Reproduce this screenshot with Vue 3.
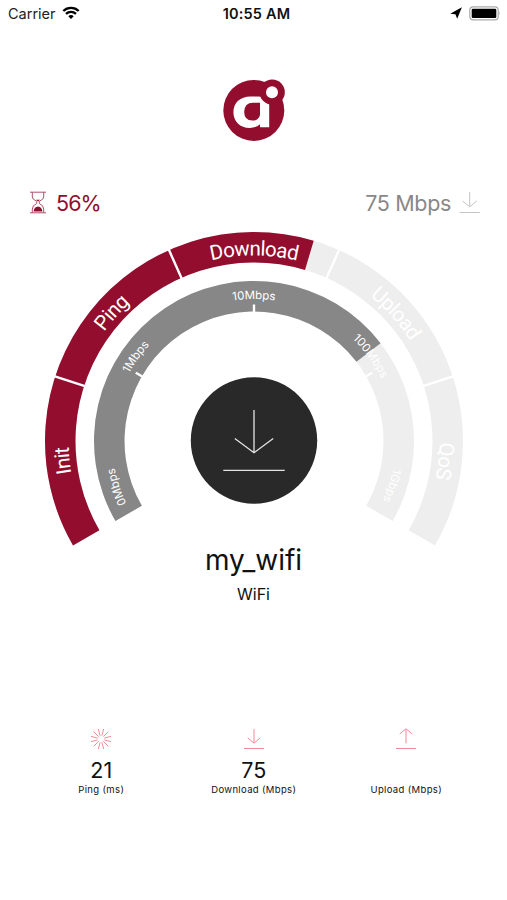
<template>
  <div class="screen">
    <header class="status-bar">
      <div class="carrier">
        <span>Carrier</span>
        <svg class="wifi" width="18" height="14" viewBox="0 0 18 14">
          <path d="M9 13 L6.3 10.2 A3.9 3.9 0 0 1 11.7 10.2 Z" />
          <path class="wave" d="M4 7.9 A7.2 7.2 0 0 1 14 7.9" />
          <path class="wave" d="M1.3 5 A11 11 0 0 1 16.7 5" />
        </svg>
      </div>
      <span class="clock">10:55 AM</span>
      <div class="indicators">
        <svg width="12" height="12" viewBox="0 0 12 12">
          <path d="M11.9 0.2 L7.2 11.8 L5.4 7.2 L0.2 6.8 Z" />
        </svg>
        <svg width="32" height="15" viewBox="0 0 32 15">
          <rect class="battery-case" x="0.8" y="0.9" width="28.4" height="13" rx="3.4" />
          <rect x="2.7" y="2.8" width="24.6" height="9.2" rx="1.2" />
          <path class="battery-cap" d="M30.4 5 Q32 7.4 30.4 9.8 Z" />
        </svg>
      </div>
    </header>

    <svg class="logo" width="64" height="64" viewBox="222 78 64 64">
      <circle class="brand" cx="253.8" cy="110.4" r="30.5" />
      <path class="mark" d="M269.2 96.8 V127.2 H260 V124.2 Q256.2 128 249.8 128 C240 128 233.4 121.4 233.4 112.3 C233.4 102.8 240.2 96.5 250.5 96.5 Z" />
      <path class="brand" d="M260 102.8 V115 Q258.6 120.6 252.3 120.6 Q244.2 120.2 244.2 112 Q244.4 102.8 253 102.8 Z" />
      <circle class="brand" cx="272.2" cy="92.2" r="12.6" />
      <circle class="mark" cx="272" cy="92.2" r="6" />
    </svg>

    <section class="progress-row">
      <div class="progress">
        <svg width="18" height="24" viewBox="0 0 18 24">
          <path class="glass" d="M1 1.2 H17 M1 21.8 H17 M3.3 1.2 V6 Q3.3 8.3 7.7 10.3 V12.5 Q3.3 14.5 3.3 18 V21.8 M14.7 1.2 V6 Q14.7 8.3 10.3 10.3 V12.5 Q14.7 14.5 14.7 18 V21.8" />
          <path class="sand" d="M4.6 20.4 Q5 16.4 9 15.6 Q13 16.4 13.4 20.4 Z M7 8.8 H11 L9 10.4 Z" />
        </svg>
        <span>{{ progress }}%</span>
      </div>
      <div class="speed">
        <span>{{ speed }} Mbps</span>
        <svg width="22" height="24" viewBox="0 0 22 24">
          <path d="M10.7 1 V15.6 M3.6 10 L10.7 15.8 L17.8 10 M0.6 21.5 H20.8" />
        </svg>
      </div>
    </section>

    <svg class="gauge" width="507" height="322" viewBox="0 228 507 322">
      <defs>
        <path id="phase-path" :d="circlePath(185.5)" />
        <path id="speed-path" :d="circlePath(142)" />
      </defs>

      <path class="track" :d="ring(-120, 120, 178.5, 209)" />
      <path class="phase-value" :d="ring(-120, 16.6, 178.5, 209)" />
      <path v-for="a in [-72, -24, 24, 72]" :key="a" class="divider" :d="tick(a, 177, 211)" />

      <path class="track" :d="ring(-120, 120, 129.5, 160)" />
      <path class="speed-value" :d="ring(-120, 52.3, 129.5, 160)" />
      <path v-for="a in [-60, 0, 60]" :key="a" class="divider" :d="tick(a, 129, 136.5)" />

      <text v-for="p in phases" :key="p.name" class="phase-label">
        <textPath href="#phase-path" :startOffset="offset(p.angle)">{{ p.name }}</textPath>
      </text>
      <text v-for="m in marks" :key="m.name" class="speed-label">
        <textPath href="#speed-path" :startOffset="offset(m.angle)">{{ m.name }}</textPath>
      </text>

      <circle class="hub" :cx="cx" :cy="cy - 0.5" r="63.2" />
      <path class="hub-icon" d="M254 410 V452.5 M234.8 438.4 L254 452.7 L273.2 438.4 M223.3 470.4 H284.7" />
    </svg>

    <h1 class="network">my_wifi</h1>
    <p class="network-type">WiFi</p>

    <section class="results">
      <div class="result">
        <svg width="22" height="22" viewBox="0 0 22 22">
          <path v-for="a in 12" :key="a" :d="spoke(a * 30 + 15)" />
        </svg>
        <strong>21</strong>
        <span>Ping (ms)</span>
      </div>
      <div class="result">
        <svg width="22" height="22" viewBox="0 0 22 22">
          <path d="M11 1 V15 M4.7 9.8 L11 15.2 L17.3 9.8 M1 20.5 H21" />
        </svg>
        <strong>75</strong>
        <span>Download (Mbps)</span>
      </div>
      <div class="result">
        <svg width="22" height="22" viewBox="0 0 22 22">
          <path d="M11 1 V15.4 M4.7 6 L11 0.8 L17.3 6 M1 20.5 H21" />
        </svg>
        <strong></strong>
        <span>Upload (Mbps)</span>
      </div>
    </section>
  </div>
</template>

<script setup>
import { ref } from 'vue'

const progress = ref(56)
const speed = ref(75)

const cx = 254
const cy = 441

const phases = [
  { name: 'Init', angle: -96 },
  { name: 'Ping', angle: -48 },
  { name: 'Download', angle: 0 },
  { name: 'Upload', angle: 48 },
  { name: 'QoS', angle: 96 }
]

const marks = [
  { name: '0Mbps', angle: -108.5 },
  { name: '1Mbps', angle: -54.5 },
  { name: '10Mbps', angle: 0 },
  { name: '100Mbps', angle: 54 },
  { name: '1Gbps', angle: 108 }
]

// angles are in degrees, clockwise from the top
const polar = (angle, r, x = cx, y = cy) => {
  const rad = (angle * Math.PI) / 180
  return `${(x + r * Math.sin(rad)).toFixed(2)} ${(y - r * Math.cos(rad)).toFixed(2)}`
}

const ring = (from, to, inner, outer) => {
  const large = to - from > 180 ? 1 : 0
  return `M${polar(from, outer)} A${outer} ${outer} 0 ${large} 1 ${polar(to, outer)} ` +
    `L${polar(to, inner)} A${inner} ${inner} 0 ${large} 0 ${polar(from, inner)} Z`
}

const tick = (angle, inner, outer) => `M${polar(angle, inner)} L${polar(angle, outer)}`

const spoke = (angle) => `M${polar(angle, 3.4, 11, 11)} L${polar(angle, 10.4, 11, 11)}`

// full circle that starts at the bottom, so labels never cross the seam
const circlePath = (r) =>
  `M${polar(180, r)} A${r} ${r} 0 0 1 ${polar(0, r)} A${r} ${r} 0 0 1 ${polar(180, r)}`

const offset = (angle) => `${((angle + 180) / 360) * 100}%`
</script>

<style>
body {
  background: #fff;
}
</style>

<style scoped>
.screen {
  display: flex;
  flex-direction: column;
  width: 507px;
  height: 900px;
  overflow: hidden;
  background: #fff;
  color: #111;
  font-family: Inter, "Noto Sans", sans-serif;
}

.status-bar {
  display: grid;
  grid-template-columns: 1fr auto 1fr;
  align-items: center;
  height: 26px;
  padding: 0 6px 0 8px;
  font-size: 14.5px;
}

.carrier {
  display: flex;
  align-items: center;
  gap: 6px;
  color: #222;
}

.wave {
  fill: none;
  stroke: #000;
  stroke-width: 2.3;
}

.clock {
  padding-left: 4px;
  font-size: 14.5px;
  font-weight: 600;
  letter-spacing: 0.15px;
}

.indicators {
  display: flex;
  justify-content: flex-end;
  align-items: center;
  gap: 7px;
}

.battery-case {
  fill: #fff;
  stroke: #aaa;
  stroke-width: 1.2;
}

.battery-cap {
  fill: #aaa;
}

.logo {
  margin: 52px 0 0 222px;
}

.brand {
  fill: #920d2e;
}

.mark {
  fill: #fff;
}

.progress-row {
  display: flex;
  justify-content: space-between;
  height: 24px;
  margin-top: 49px;
  padding: 0 26px 0 29px;
  font-size: 21.5px;
  line-height: 24px;
}

.progress,
.speed {
  display: flex;
  align-items: center;
}

.progress {
  gap: 9px;
  color: #920d2e;
  letter-spacing: -0.9px;
}

.speed {
  gap: 8px;
  color: #888;
  letter-spacing: -0.35px;
}

.speed path {
  fill: none;
  stroke: #c4c4c4;
  stroke-width: 1;
}

.glass {
  fill: none;
  stroke: #b0526a;
  stroke-width: 1;
}

.sand {
  fill: #920d2e;
}

.gauge {
  margin-top: 13px;
}

.track {
  fill: #eee;
}

.phase-value {
  fill: #920d2e;
}

.speed-value {
  fill: #878787;
}

.divider {
  stroke: #fff;
  stroke-width: 2.4;
}

.phase-label,
.speed-label {
  fill: #fff;
  text-anchor: middle;
}

.phase-label {
  font-family: Roboto, sans-serif;
  font-size: 20.5px;
  letter-spacing: -0.65px;
}

.speed-label {
  font-size: 11.5px;
}

.hub {
  fill: #292929;
}

.hub-icon {
  fill: none;
  stroke: #e4e4e4;
  stroke-width: 1.3;
}

.network,
.network-type {
  margin: 0;
  color: #111;
  font-weight: 400;
  text-align: center;
}

.network {
  margin-top: -8px;
  font-size: 28px;
  line-height: 36px;
}

.network-type {
  margin-top: 4px;
  font-size: 16px;
  line-height: 24px;
}

.results {
  display: grid;
  grid-template-columns: repeat(3, 152.5px);
  margin: 122px 0 0 25px;
}

.result {
  display: flex;
  flex-direction: column;
  align-items: center;
}

.result path {
  fill: none;
  stroke: #ee8d98;
  stroke-width: 1;
}

.result strong {
  height: 24px;
  margin-top: 8px;
  font-size: 21.5px;
  font-weight: 400;
  line-height: 24px;
}

.result span {
  margin-top: 1px;
  font-size: 9.5px;
  line-height: 14px;
  letter-spacing: 0.35px;
}
</style>
